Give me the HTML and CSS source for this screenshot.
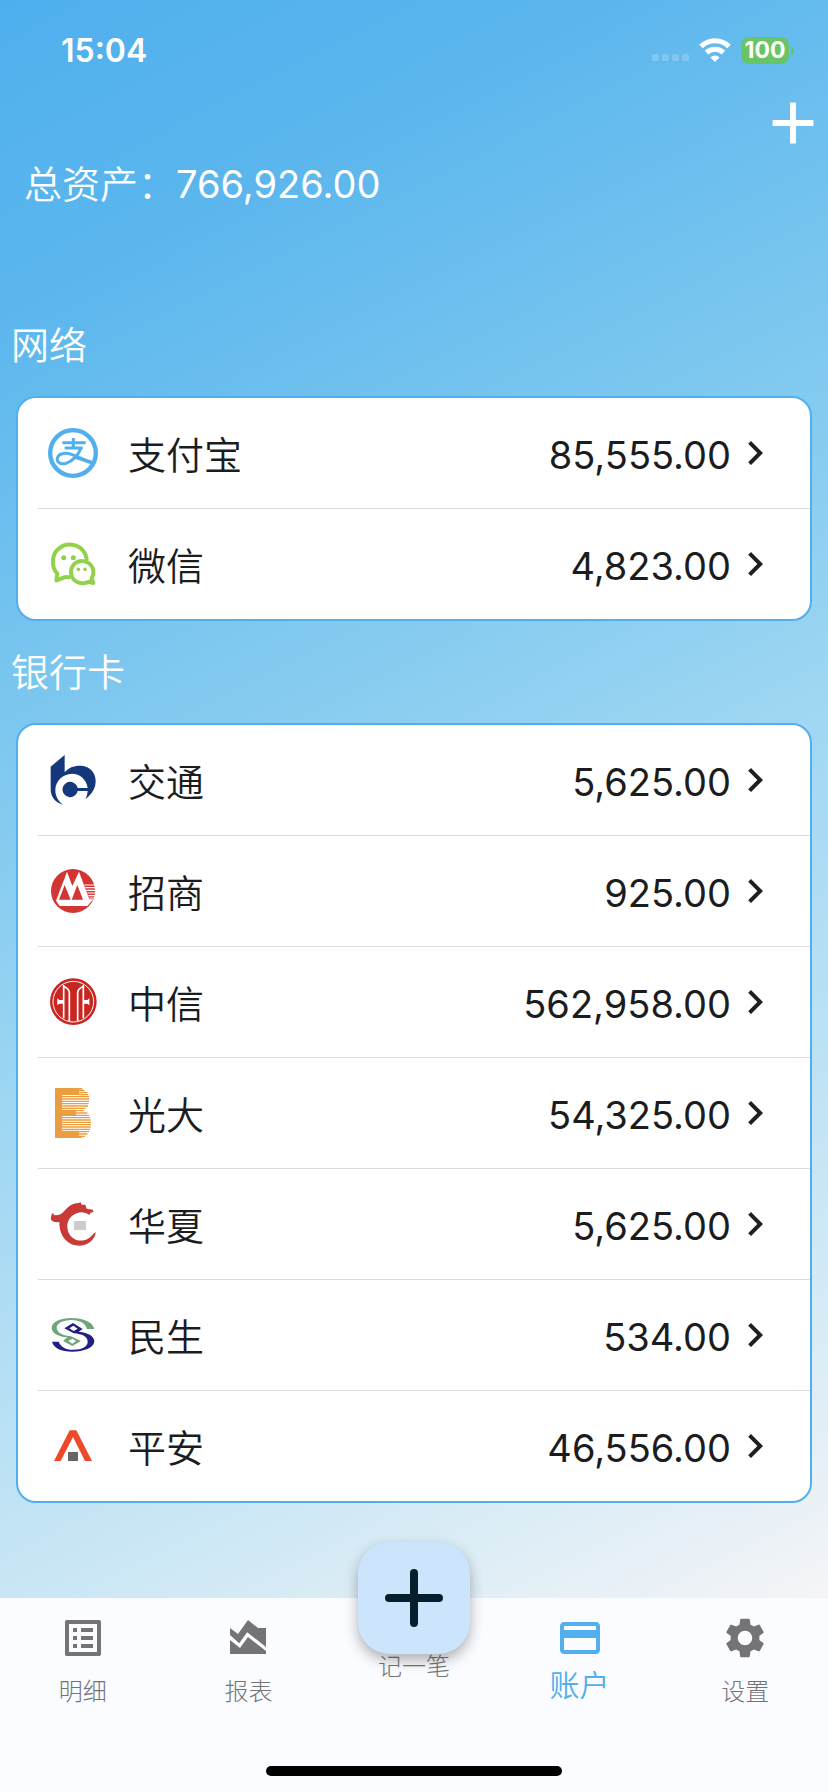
FILE: index.html
```html
<!DOCTYPE html>
<html lang="zh-CN">
<head>
<meta charset="utf-8">
<meta name="viewport" content="width=device-width, initial-scale=1">
<title>账户</title>
<link rel="stylesheet" href="styles.css">
</head>
<body>
<div class="app">
  <main class="content">
    <div class="status">
      <span class="time">15:04</span>
      <div class="status-icons">
        <span class="signal"><i></i><i></i><i></i><i></i></span>
        <svg class="wifi" viewBox="0 0 32 24" aria-hidden="true">
          <path d="M2 8.600A19.800 19.800 0 0 1 30 8.600" fill="none" stroke="#fff" stroke-width="5"/>
          <path d="M7.600 14.600a12 12 0 0 1 16.800 0" fill="none" stroke="#fff" stroke-width="5"/>
          <path d="M16 24l-4.600-4.600a6.600 6.600 0 0 1 9.200 0z" fill="#fff"/>
        </svg>
        <span class="battery">100</span>
      </div>
    </div>
    <div class="toolbar">
      <button class="add" aria-label="添加账户">
        <svg viewBox="0 0 24 24"><path d="M19 13h-6v6h-2v-6H5v-2h6V5h2v6h6z" fill="#fff"/></svg>
      </button>
    </div>
    <h1 class="total">总资产：<span class="sum">766,926.00</span></h1>

    <h2 class="heading">网络</h2>
    <ul class="card">
      <li><a class="row" href="#">
        <svg class="logo" viewBox="144 384 150 150" fill="none" stroke="#52afed">
          <circle cx="219" cy="459" r="68.500" stroke-width="13"/>
          <path d="M220 414v28M187 428h70M194 444h54" stroke-width="9"/>
          <path d="M243 443C238 462 218 484 198 490C180 495 170 486 172 475C175 460 196 457 214 463C236 470 250 480 278 489" stroke-width="9"/>
          <path d="M232 470L278 482v12L224 476z" fill="#52afed" stroke="none"/>
        </svg>
        <span class="name">支付宝</span><span class="amount">85,555.00</span>
        <svg class="chevron" viewBox="0 0 24 24"><path d="M10 6 8.590 7.410 13.170 12l-4.580 4.590L10 18l6-6z"/></svg></a></li>
      <li><a class="row" href="#">
        <svg class="logo" viewBox="144 717 150 150" fill="none" stroke="#92d24b" stroke-width="12" stroke-linejoin="round" stroke-linecap="round">
          <path d="M206 832Q196 830 188 834L169 841L172 821C155 803 153 767 174 748C203 720 254 735 260 778"/>
          <path d="M266 845C240 858 212 842 213 814C215 791 235 780 253 784C278 789 287 815 275 835L280 849z"/>
          <g fill="#92d24b" stroke="none"><circle cx="191" cy="773" r="7.500"/><circle cx="220" cy="773" r="7.500"/><circle cx="235" cy="808" r="5.500"/><circle cx="255" cy="808" r="5.500"/></g>
        </svg>
        <span class="name">微信</span><span class="amount">4,823.00</span>
        <svg class="chevron" viewBox="0 0 24 24"><path d="M10 6 8.590 7.410 13.170 12l-4.580 4.590L10 18l6-6z"/></svg></a></li>
    </ul>

    <h2 class="heading">银行卡</h2>
    <ul class="card">
      <li><a class="row" href="#">
        <svg class="logo" viewBox="54 45 150 150" fill="#15387c">
          <path d="M62 80L104 45V97C116 82 134 76 154 77C180 79 197 98 197 123C197 146 184 164 166 178C170 171 172 162 173 153H143A23 23 0 1 1 143 144H173C170 119 150 101 126 101C97 102 76 124 76 150C76 168 84 183 99 194C77 188 62 172 62 148z"/>
        </svg>
        <span class="name">交通</span><span class="amount">5,625.00</span>
        <svg class="chevron" viewBox="0 0 24 24"><path d="M10 6 8.590 7.410 13.170 12l-4.580 4.590L10 18l6-6z"/></svg></a></li>
      <li><a class="row" href="#">
        <svg class="logo" viewBox="54 378 150 150">
          <circle cx="129" cy="453" r="66" fill="#d23532"/>
          <path d="M111 395L127 438L147 395L178 478H190L172 498H89L78 482z" fill="#fff"/>
          <path d="M87 479L104 435L122 479zM125 479L142 435L159 479z" fill="#d23532"/>
          <path d="M163 435h33M166 443h32M169 451h29M172 459h25M175 467h20M178 474h14" stroke="#fff" stroke-width="3.500"/>
        </svg>
        <span class="name">招商</span><span class="amount">925.00</span>
        <svg class="chevron" viewBox="0 0 24 24"><path d="M10 6 8.590 7.410 13.170 12l-4.580 4.590L10 18l6-6z"/></svg></a></li>
      <li><a class="row" href="#">
        <svg class="logo" viewBox="54 111 150 150">
          <circle cx="130" cy="185" r="70" fill="#c92622"/>
          <g fill="none" stroke="#fff" stroke-width="3">
            <circle cx="130" cy="185" r="61"/>
            <path d="M101 135V235M118 244V158Q117 146 103 140M143 244V158Q144 146 158 140M160 135V235" stroke-width="5"/>
          </g>
          <path d="M82 175L88 180H101V191H88L82 196zM178 175L172 180H160V191H172L178 196z" fill="#fff"/>
        </svg>
        <span class="name">中信</span><span class="amount">562,958.00</span>
        <svg class="chevron" viewBox="0 0 24 24"><path d="M10 6 8.590 7.410 13.170 12l-4.580 4.590L10 18l6-6z"/></svg></a></li>
      <li><a class="row" href="#">
        <svg class="logo" viewBox="54 444 150 150">
          <path d="M75 444H155L160 449H147V465H96V509H138V528H96V572H147V589H159L154 594H75z" fill="#eb9e40"/>
          <path d="M146 452h18M146 458h26M146 464h29M96 470h81M96 477h82M96 484h81M96 491h80M96 498h78M96 505h71M138 512h24M138 519h34M138 526h40M96 533h84M96 540h86M96 547h87M96 554h87M96 561h86M96 568h84M146 575h31M146 582h26M146 589h19" stroke="#eb9e40" stroke-width="4"/>
        </svg>
        <span class="name">光大</span><span class="amount">54,325.00</span>
        <svg class="chevron" viewBox="0 0 24 24"><path d="M10 6 8.590 7.410 13.170 12l-4.580 4.590L10 18l6-6z"/></svg></a></li>
      <li><a class="row" href="#">
        <svg class="logo" viewBox="54 117 150 150">
          <path d="M69 158L72 165Q86 168 98 158C112 145 120 129 147 129L151 126L155 134L166 134L170 146L188 149L191 155L182 158L178 165C168 158 157 155 145 158C120 164 108 185 113 209C119 239 153 251 177 234C188 228 190 219 197 217C196 238 174 257 149 257C112 256 87 228 88 185Q75 190 63 180Q61 166 69 158z" fill="#c93a37"/>
          <path d="M132 183h36v27h-36z" fill="#ccc"/>
        </svg>
        <span class="name">华夏</span><span class="amount">5,625.00</span>
        <svg class="chevron" viewBox="0 0 24 24"><path d="M10 6 8.590 7.410 13.170 12l-4.580 4.590L10 18l6-6z"/></svg></a></li>
      <li><a class="row" href="#">
        <svg class="logo" viewBox="54 450 150 150">
          <path d="M193 507H171C166 488 146 480 123 480C98 481 80 490 80 503C81 520 101 526 123 529L153 543L127 558L99 543L112 532C83 529 65 519 65 503C66 485 93 474 124 474C161 474 188 486 193 507zM115 543L127 551L138 543L127 536z" fill="#6fa67b" fill-rule="evenodd"/>
          <path d="M66 545H86C93 561 108 569 128 569C158 569 173 559 173 545C173 530 157 522 131 520L103 505L129 489L158 507L146 515C176 518 193 529 193 544C192 564 161 575 127 575C94 575 71 564 66 545zM118 505L131 513L143 506L130 497z" fill="#211f86" fill-rule="evenodd"/>
        </svg>
        <span class="name">民生</span><span class="amount">534.00</span>
        <svg class="chevron" viewBox="0 0 24 24"><path d="M10 6 8.590 7.410 13.170 12l-4.580 4.590L10 18l6-6z"/></svg></a></li>
      <li><a class="row" href="#">
        <svg class="logo" viewBox="54 783 150 150">
          <path d="M72 903L119 811H139L186 903H165L129 831L92 903z" fill="#ee4928"/>
          <path d="M114 876h30v27h-30z" fill="#666"/>
        </svg>
        <span class="name">平安</span><span class="amount">46,556.00</span>
        <svg class="chevron" viewBox="0 0 24 24"><path d="M10 6 8.590 7.410 13.170 12l-4.580 4.590L10 18l6-6z"/></svg></a></li>
    </ul>
  </main>

  <nav class="tabs">
    <a class="tab" href="#">
      <svg viewBox="0 0 24 24"><path d="M19 5v14H5V5h14m1.100-2H3.900c-.5 0-.9.4-.9.9v16.200c0 .4.4.9.9.9h16.200c.4 0 .9-.5.9-.9V3.900c0-.5-.5-.9-.9-.9zM11 7h6v2h-6V7zm0 4h6v2h-6v-2zm0 4h6v2h-6zM7 7h2v2H7zm0 4h2v2H7zm0 4h2v2H7z"/></svg>
      <span>明细</span></a>
    <a class="tab" href="#">
      <svg viewBox="0 0 24 24"><path d="M3 13v7h18v-1.500l-9-7L8 17zM3 7l4 3 5-7 5 4h4v9.470l-9.400-7.310-3.980 5.480L3 10.440z"/></svg>
      <span>报表</span></a>
    <div class="tab compose">
      <button class="fab" aria-labelledby="compose-label">
        <svg viewBox="0 0 58 58"><path d="M29 4v50M4 29h50" stroke="#071f2d" stroke-width="8" stroke-linecap="round"/></svg>
      </button>
      <span id="compose-label">记一笔</span></div>
    <a class="tab active" href="#" aria-current="page">
      <svg viewBox="0 0 24 24"><path d="M20 4H4c-1.110 0-1.990.89-1.990 2L2 18c0 1.110.89 2 2 2h16c1.110 0 2-.89 2-2V6c0-1.110-.89-2-2-2zm0 14H4v-6h16v6zm0-10H4V6h16v2z"/></svg>
      <span>账户</span></a>
    <a class="tab" href="#">
      <svg viewBox="0 0 24 24"><path d="M19.140 12.940c.04-.3.06-.61.06-.94 0-.32-.02-.64-.07-.94l2.030-1.580c.18-.14.23-.41.12-.61l-1.920-3.320c-.12-.22-.37-.29-.59-.22l-2.390.96c-.5-.38-1.030-.7-1.620-.94l-.36-2.540c-.04-.24-.24-.41-.48-.41h-3.840c-.24 0-.43.17-.47.41l-.36 2.540c-.59.24-1.130.57-1.620.94l-2.390-.96c-.22-.08-.47 0-.59.22L2.740 8.870c-.12.21-.08.47.12.61l2.030 1.580c-.05.3-.09.63-.09.94s.02.64.07.94l-2.030 1.580c-.18.14-.23.41-.12.61l1.920 3.320c.12.22.37.29.59.22l2.390-.96c.5.38 1.030.7 1.620.94l.36 2.540c.05.24.24.41.48.41h3.840c.24 0 .44-.17.47-.41l.36-2.540c.59-.24 1.130-.56 1.620-.94l2.390.96c.22.08.47 0 .59-.22l1.920-3.320c.12-.22.07-.47-.12-.61l-2.010-1.580zM12 15.600c-1.980 0-3.600-1.620-3.600-3.600s1.620-3.600 3.600-3.600 3.600 1.620 3.600 3.600-1.620 3.600-3.600 3.600z"/></svg>
      <span>设置</span></a>
    <div class="home-bar"></div>
  </nav>
</div>
</body>
</html>
```
FILE: styles.css
```css
* { box-sizing: border-box; }

body {
  margin: 0;
  font-family: Inter, "Noto Sans CJK SC", sans-serif;
  font-size: 38px;
  font-weight: 350;
  color: #1b1c1e;
}

a { color: inherit; text-decoration: none; }
button { border: 0; padding: 0; background: none; cursor: pointer; }
svg { display: block; flex: none; }

.app {
  min-height: 100vh;
  display: flex;
  flex-direction: column;
}

.content {
  flex: 1;
  background: linear-gradient(153deg, #4fafee 0%, #5bb6ed 15%, #74c3ef 31%, #8bcef0 45%, #a0d7f3 56%, #c8e6f5 79%, #f5f5f7 100%);
}

.status {
  height: 88px;
  padding: 12px 34px 0 61px;
  display: flex;
  align-items: center;
  justify-content: space-between;
  color: #fff;
}
.time { font-size: 32px; font-weight: 600; }
.status-icons { display: flex; align-items: center; gap: 10px; }
.signal { display: flex; gap: 3px; padding-top: 14px; }
.signal i { width: 7px; height: 7px; border-radius: 2px; background: rgba(255, 255, 255, .2); }
.wifi { width: 32px; height: 24px; }
.battery {
  position: relative;
  width: 48px;
  height: 27px;
  margin-right: 5px;
  border-radius: 8px;
  background: #67c567;
  font-size: 23px;
  line-height: 27px;
  font-weight: 700;
  text-align: center;
}
.battery::after {
  content: "";
  position: absolute;
  left: 50px;
  top: 10px;
  width: 3px;
  height: 8px;
  border-radius: 0 3px 3px 0;
  background: #67c567;
}

.toolbar { display: flex; justify-content: flex-end; }
.add { width: 70px; height: 70px; }
.add svg { width: 70px; height: 70px; }

.total {
  margin: 0;
  padding: 0 24px;
  font-size: 38px;
  line-height: 52px;
  font-weight: 350;
  color: #fff;
}

.heading {
  margin: 0;
  padding: 24px 11px;
  font-size: 38px;
  line-height: 54px;
  font-weight: 350;
  color: #fff;
}
.total + .heading { margin-top: 84px; }

.card {
  margin: 0 16px;
  padding: 0 0 0 20px;
  list-style: none;
  background: #fff;
  border: 2px solid #52afed;
  border-radius: 20px;
}
.card li + li { border-top: 1px solid #dcdcdc; }

.row {
  height: 110px;
  padding: 0 31px 0 10px;
  display: flex;
  align-items: center;
  line-height: 52px;
}
.logo { width: 50px; height: 50px; }
.name { flex: 1; padding: 3px 0 0 30px; }
.amount { padding-top: 3px; }
.amount, .sum { font-weight: 400; }
.chevron { width: 48px; height: 48px; fill: #1f1f21; }

.tabs {
  position: relative;
  height: 194px;
  display: grid;
  grid-template-columns: repeat(5, 1fr);
  background: #fbfcff;
  color: #747477;
}
.tab {
  padding-top: 16px;
  display: flex;
  flex-direction: column;
  align-items: center;
  font-size: 24px;
  font-weight: 300;
  line-height: 36px;
}
.tab svg { width: 48px; height: 48px; fill: currentColor; }
.tab span { margin-top: 12px; }
.tab.active { color: #52afed; font-size: 30px; font-weight: 350; }
.tab.active span { margin-top: 5px; }

.compose { padding-top: 0; margin-top: -56px; }
.compose .fab {
  z-index: 1;
  width: 112px;
  height: 112px;
  display: grid;
  place-items: center;
  border-radius: 32px;
  background: #cce5fc;
  box-shadow: 0 6px 14px rgba(0, 0, 0, .3);
}
.compose .fab svg { width: 58px; height: 58px; }
.tab.compose span { margin-top: -5px; }

.home-bar {
  position: absolute;
  left: 50%;
  bottom: 16px;
  width: 296px;
  height: 10px;
  margin-left: -148px;
  border-radius: 5px;
  background: #000;
}
```
